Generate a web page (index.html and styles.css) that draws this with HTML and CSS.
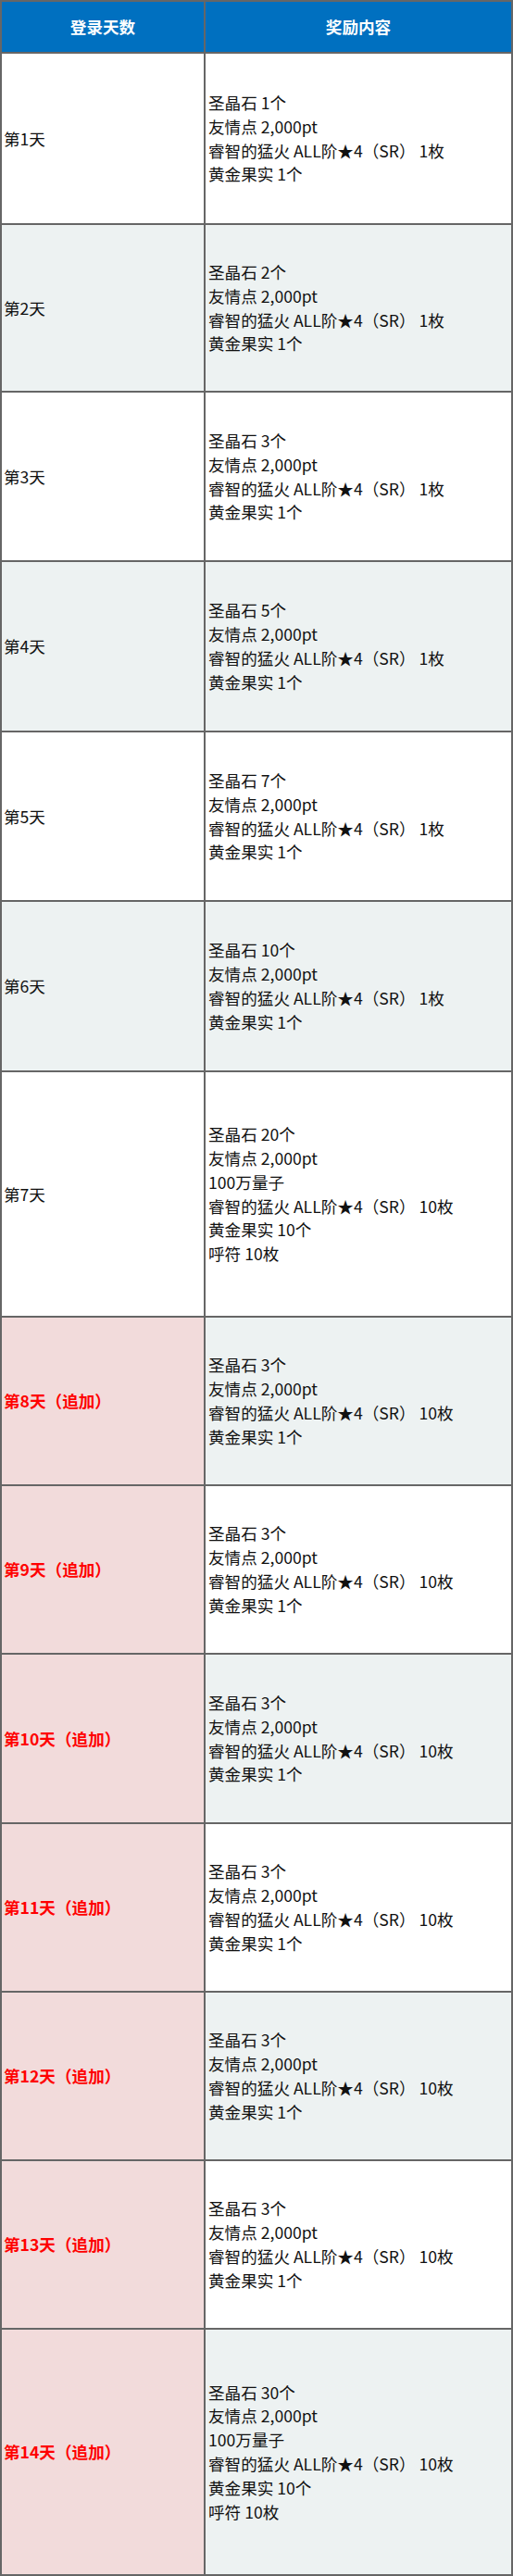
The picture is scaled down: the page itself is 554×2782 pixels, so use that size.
FILE: index.html
```html
<!DOCTYPE html>
<html lang="zh-CN">
<head>
<meta charset="utf-8">
<title>登录奖励</title>
<link rel="stylesheet" href="styles.css">
</head>
<body>
<div class="table">
  <div class="cell head">登录天数</div>
  <div class="cell head">奖励内容</div>

  <div class="cell day">第1天</div>
  <div class="cell reward">圣晶石 1个<br>友情点 2,000pt<br>睿智的猛火 ALL阶★4（SR） 1枚<br>黄金果实 1个</div>

  <div class="cell day alt">第2天</div>
  <div class="cell reward alt">圣晶石 2个<br>友情点 2,000pt<br>睿智的猛火 ALL阶★4（SR） 1枚<br>黄金果实 1个</div>

  <div class="cell day">第3天</div>
  <div class="cell reward">圣晶石 3个<br>友情点 2,000pt<br>睿智的猛火 ALL阶★4（SR） 1枚<br>黄金果实 1个</div>

  <div class="cell day alt">第4天</div>
  <div class="cell reward alt">圣晶石 5个<br>友情点 2,000pt<br>睿智的猛火 ALL阶★4（SR） 1枚<br>黄金果实 1个</div>

  <div class="cell day">第5天</div>
  <div class="cell reward">圣晶石 7个<br>友情点 2,000pt<br>睿智的猛火 ALL阶★4（SR） 1枚<br>黄金果实 1个</div>

  <div class="cell day alt">第6天</div>
  <div class="cell reward alt">圣晶石 10个<br>友情点 2,000pt<br>睿智的猛火 ALL阶★4（SR） 1枚<br>黄金果实 1个</div>

  <div class="cell day">第7天</div>
  <div class="cell reward">圣晶石 20个<br>友情点 2,000pt<br>100万量子<br>睿智的猛火 ALL阶★4（SR） 10枚<br>黄金果实 10个<br>呼符 10枚</div>

  <div class="cell day extra">第8天（追加）</div>
  <div class="cell reward alt">圣晶石 3个<br>友情点 2,000pt<br>睿智的猛火 ALL阶★4（SR） 10枚<br>黄金果实 1个</div>

  <div class="cell day extra">第9天（追加）</div>
  <div class="cell reward">圣晶石 3个<br>友情点 2,000pt<br>睿智的猛火 ALL阶★4（SR） 10枚<br>黄金果实 1个</div>

  <div class="cell day extra">第10天（追加）</div>
  <div class="cell reward alt">圣晶石 3个<br>友情点 2,000pt<br>睿智的猛火 ALL阶★4（SR） 10枚<br>黄金果实 1个</div>

  <div class="cell day extra">第11天（追加）</div>
  <div class="cell reward">圣晶石 3个<br>友情点 2,000pt<br>睿智的猛火 ALL阶★4（SR） 10枚<br>黄金果实 1个</div>

  <div class="cell day extra">第12天（追加）</div>
  <div class="cell reward alt">圣晶石 3个<br>友情点 2,000pt<br>睿智的猛火 ALL阶★4（SR） 10枚<br>黄金果实 1个</div>

  <div class="cell day extra">第13天（追加）</div>
  <div class="cell reward">圣晶石 3个<br>友情点 2,000pt<br>睿智的猛火 ALL阶★4（SR） 10枚<br>黄金果实 1个</div>

  <div class="cell day extra">第14天（追加）</div>
  <div class="cell reward alt">圣晶石 30个<br>友情点 2,000pt<br>100万量子<br>睿智的猛火 ALL阶★4（SR） 10枚<br>黄金果实 10个<br>呼符 10枚</div>
</div>
</body>
</html>
```

FILE: styles.css
```css
* {
  box-sizing: border-box;
}

html, body {
  margin: 0;
  padding: 0;
  background: #ffffff;
}

body {
  font-family: "Noto Sans CJK SC", "Noto Sans", sans-serif;
  font-size: 17.6px;
  line-height: 25.8px;
  color: #111111;
}

.table {
  width: 554px;
  display: grid;
  grid-template-columns: 220px 332px;
  grid-template-rows: 56px 185px 181px 183px 184px 183px 184px 265px 182px 182px 183px 182px 182px 182px 266px;
  border-top: 2px solid #666666;
  border-left: 2px solid #666666;
}

.cell {
  display: flex;
  align-items: center;
  border-right: 2px solid #666666;
  border-bottom: 2px solid #666666;
  background: #ffffff;
}

.head {
  justify-content: center;
  background: #0070c0;
  color: #ffffff;
  font-weight: 700;
}

.day {
  padding: 0 2px;
}

.reward {
  padding: 0 3px;
}

.alt {
  background: #edf2f2;
}

.extra {
  background: #f2dbdb;
  color: #ff0000;
  font-weight: 700;
}
```
